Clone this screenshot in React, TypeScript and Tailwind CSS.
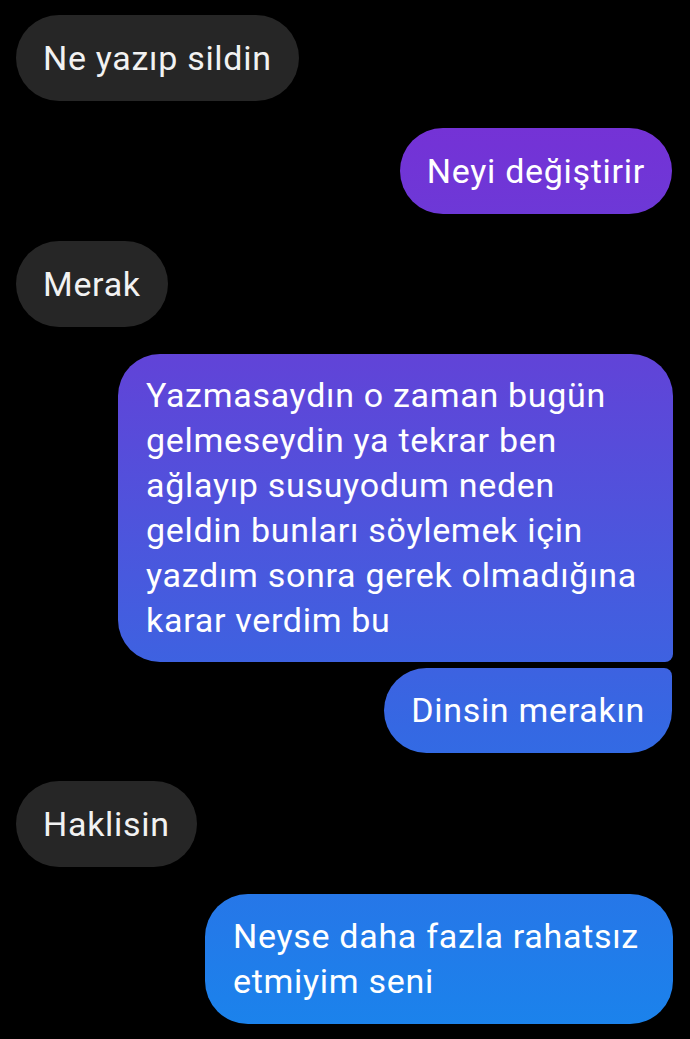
const grad =
  "bg-[linear-gradient(180deg,#7d2fd4_0%,#7333d6_14%,#5f45d8_36%,#4060e0_62%,#3568e3_70%,#1d80eb_96%,#1a84ec_100%)] bg-fixed";

function Received({ text }: { text: string }) {
  return (
    <div className="flex justify-start pl-4">
      <div className="rounded-[43px] bg-[#262626] px-[27px] py-[20.5px] text-[#f2f2f2]">
        {text}
      </div>
    </div>
  );
}

export default function App() {
  return (
    <div
      className="min-h-screen bg-black pt-[15px] text-[34px] leading-[45px] tracking-[0.7px] text-white"
      style={{ fontFamily: "Roboto, 'Noto Sans', sans-serif" }}
    >
      <div className="flex flex-col">
        <Received text="Ne yazıp sildin" />

        <div className="mt-[27px] flex justify-end pr-[18px]">
          <div className={`${grad} rounded-[43px] px-[27px] py-[20.5px]`}>Neyi değiştirir</div>
        </div>

        <div className="mt-[27px]">
          <Received text="Merak" />
        </div>

        <div className="mt-[27px] flex justify-end pr-[17px]">
          <div
            className={`${grad} w-[555px] rounded-t-[42px] rounded-bl-[42px] rounded-br-[8px] px-[28px] py-[19px]`}
          >
            Yazmasaydın o zaman bugün
            <br />
            gelmeseydin ya tekrar ben
            <br />
            ağlayıp susuyodum neden
            <br />
            geldin bunları söylemek için
            <br />
            yazdım sonra gerek olmadığına
            <br />
            karar verdim bu
          </div>
        </div>

        <div className="mt-[6px] flex justify-end pr-[18px]">
          <div
            className={`${grad} rounded-tl-[43px] rounded-tr-[8px] rounded-b-[43px] px-[27px] py-[20px]`}
          >
            Dinsin merakın
          </div>
        </div>

        <div className="mt-[28px]">
          <Received text="Haklisin" />
        </div>

        <div className="mt-[27px] flex justify-end pr-[17px]">
          <div className={`${grad} w-[468px] rounded-[43px] px-[28px] py-[20px]`}>
            Neyse daha fazla rahatsız
            <br />
            etmiyim seni
          </div>
        </div>
      </div>
    </div>
  );
}
